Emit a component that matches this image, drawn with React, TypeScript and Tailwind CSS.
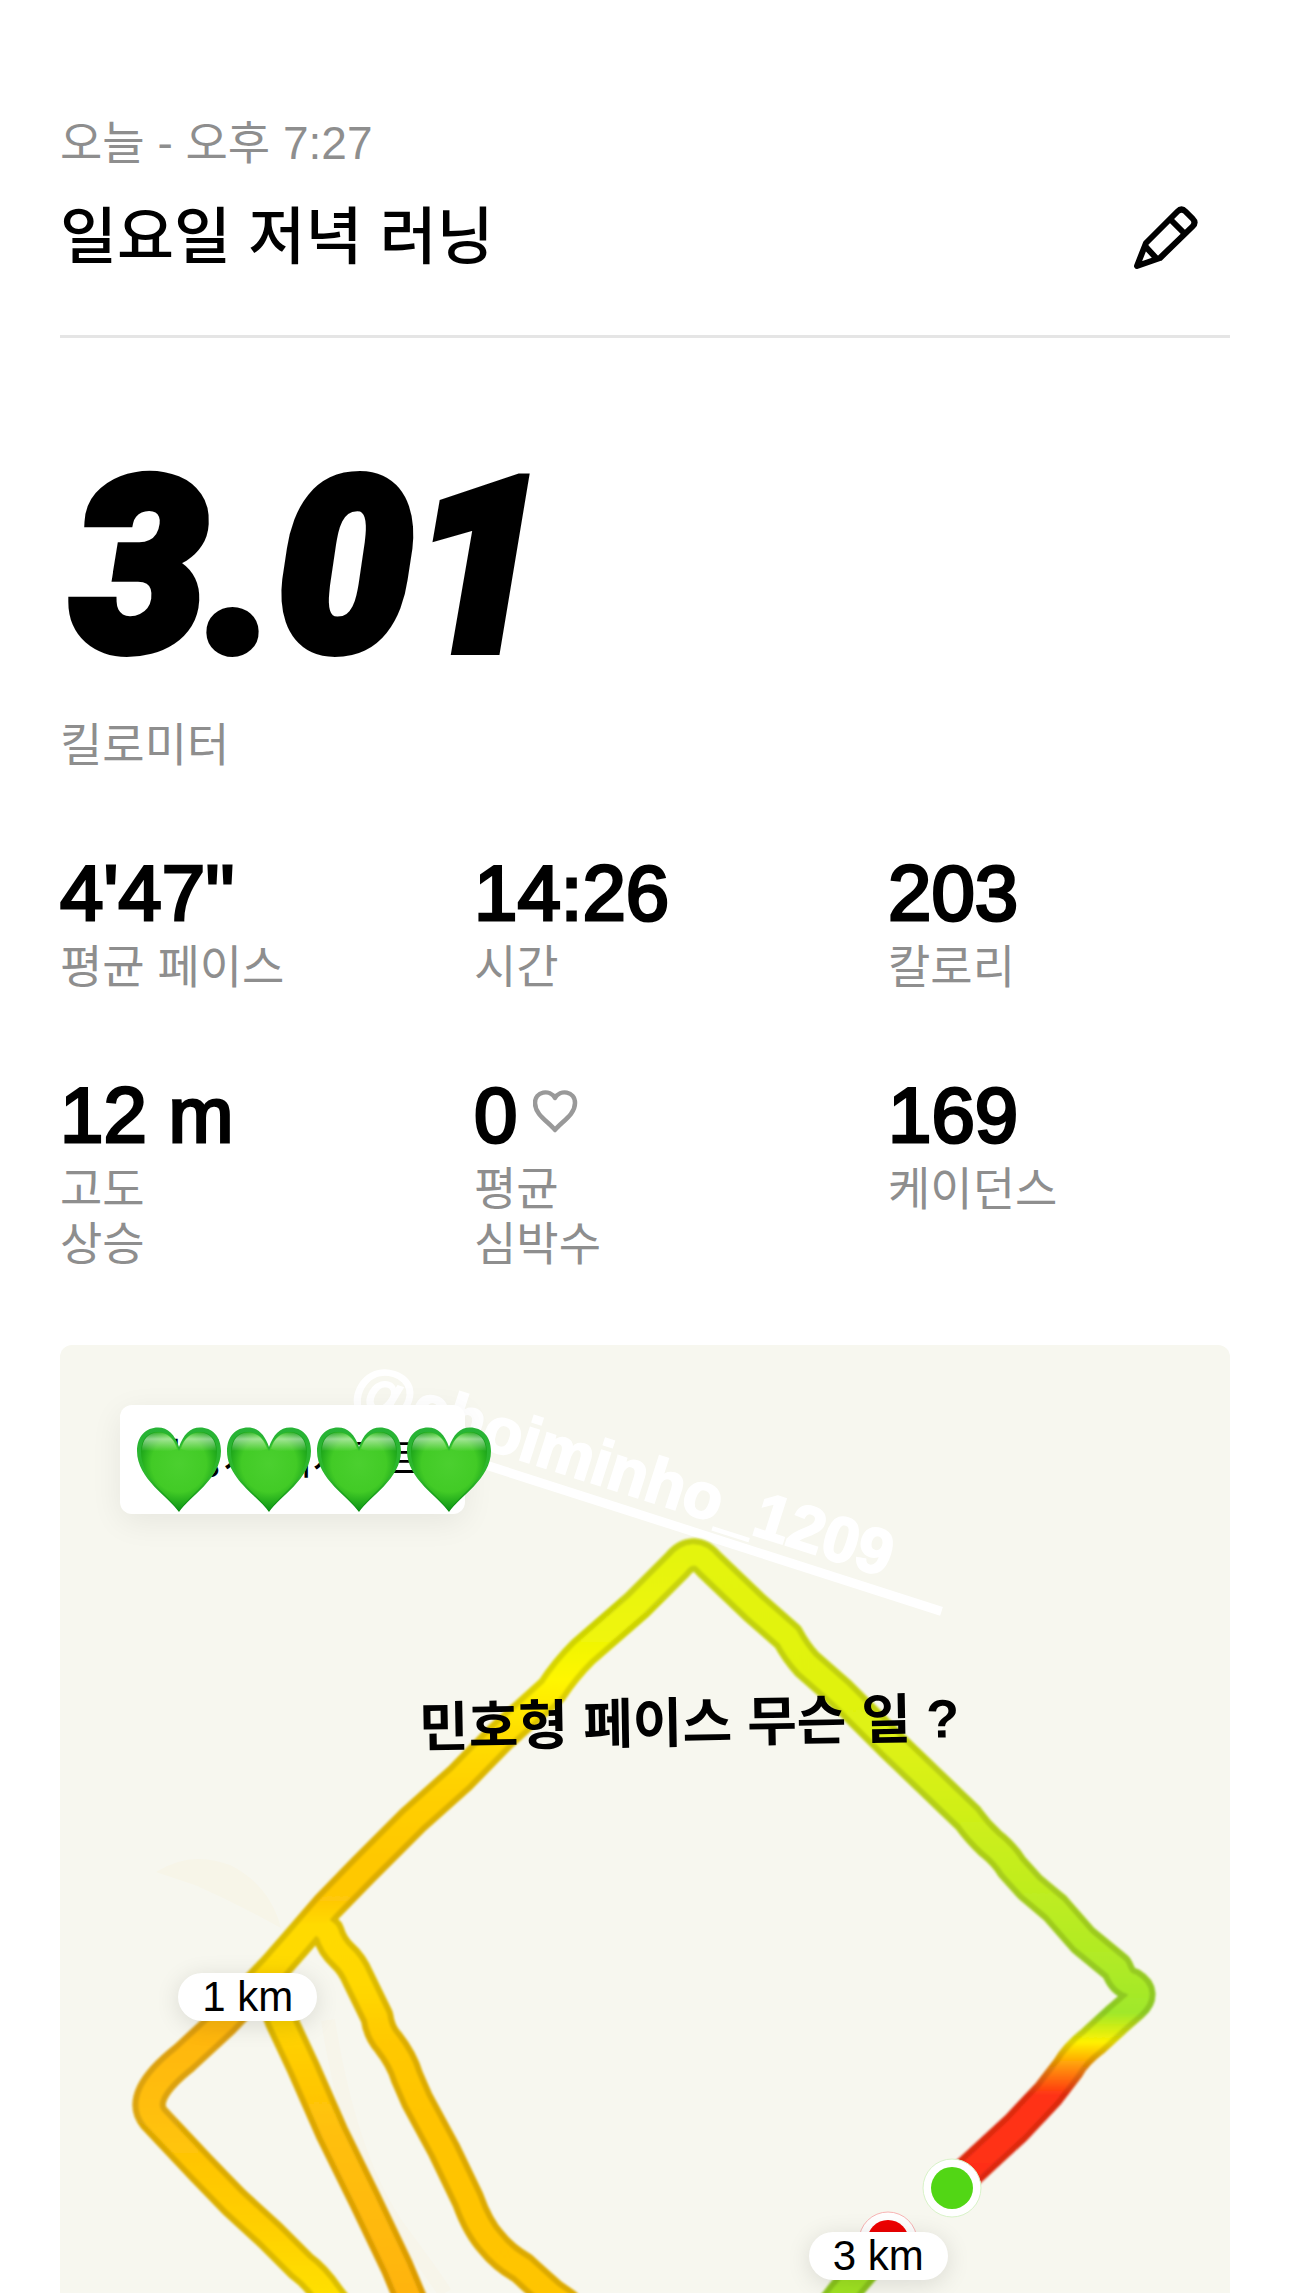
import type { ReactNode } from "react";

type StatProps = { value: string; label: string[]; icon?: ReactNode };

function Stat({ value, label, icon }: StatProps) {
  return (
    <div className="flex flex-col-reverse justify-end">
      <dt className="mt-1 text-[46px] leading-[55px] text-[#8e8e8e]">
        {label.map((line) => (
          <span key={line} className="block">
            {line}
          </span>
        ))}
      </dt>
      <dd className="flex items-center gap-4 text-[78px] leading-[86px] text-black [-webkit-text-stroke:3px_black]">
        {value}
        {icon}
      </dd>
    </div>
  );
}

function PencilIcon() {
  return (
    <svg
      viewBox="0 0 64 64"
      className="size-16"
      fill="none"
      stroke="currentColor"
      strokeWidth="6"
      strokeLinejoin="round"
      aria-hidden="true"
    >
      <path d="M3 60 L12 37 L43.500 5.500 Q47.500 1.500 51.500 5.500 L58.500 12.500 Q62.500 16.500 58.500 20.500 L26 52 Z" />
      <path d="M36 13 L50.500 27.500 M11 40 L22.500 52.500" />
    </svg>
  );
}

function HeartOutline() {
  return (
    <svg viewBox="0 0 48 44" className="h-11 w-12 -translate-y-1" fill="none" stroke="#999" strokeWidth="4.500" strokeLinejoin="round" aria-hidden="true">
      <path d="M22 41 C16 33 2 26 2 14 C2 2 17 0 22 9 C27 0 42 2 42 14 C42 26 28 33 22 41 Z" />
    </svg>
  );
}

function GreenHeart() {
  return (
    <svg viewBox="0 0 84 86" className="h-[86px] w-[84px]" aria-hidden="true">
      <path
        d="M42 85 C32 70 0 52 0 24 C0 9 9 0.500 21 0.500 C31 0.500 38 8 42 20 C46 8 53 0.500 63 0.500 C75 0.500 84 9 84 24 C84 52 52 70 42 85 Z"
        fill="url(#heart-edge)"
      />
      <path
        d="M42 84 C33 69 4 52 4 25 C4 12 11 5 21 5 C31 5 38 12 42 24 C46 12 53 5 63 5 C73 5 80 12 80 25 C80 52 51 69 42 84 Z"
        fill="url(#heart-body)"
      />
      <path d="M5 24 C5 12 12 5.500 21 5.500 C30 5.500 37 11 40 22 C30 27 14 22 5 24 Z" fill="url(#heart-gloss)" />
      <path d="M79 24 C79 12 72 5.500 63 5.500 C54 5.500 47 11 44 22 C54 27 70 22 79 24 Z" fill="url(#heart-gloss)" />
    </svg>
  );
}

function HeartGradients() {
  return (
    <svg className="absolute size-0" aria-hidden="true">
      <defs>
        <linearGradient id="heart-edge" x1="0" y1="0" x2="0" y2="1">
          <stop offset="0" stopColor="#27b336" />
          <stop offset="0.6" stopColor="#2fb82a" />
          <stop offset="1" stopColor="#078a10" />
        </linearGradient>
        <radialGradient id="heart-body" cx="0.5" cy="0.4" r="0.6">
          <stop offset="0" stopColor="#4bd02f" />
          <stop offset="0.6" stopColor="#42cb26" />
          <stop offset="1" stopColor="#0a9414" />
        </radialGradient>
        <linearGradient id="heart-gloss" x1="0" y1="0" x2="0" y2="1">
          <stop offset="0" stopColor="#fff" stopOpacity="0.1" />
          <stop offset="0.35" stopColor="#fff" stopOpacity="0.5" />
          <stop offset="1" stopColor="#fff" stopOpacity="0" />
        </linearGradient>
      </defs>
    </svg>
  );
}

type Stop = [number, string];
type Track = { id: string; d: string; stops: Stop[] };

const tracks: Track[] = [
  {
    id: "finish",
    d: "M888 2241 L866 2266 L843 2293 L830 2310",
    stops: [[2241, "#a0e424"], [2293, "#a0e424"]],
  },
  {
    id: "middle",
    d: "M270 1990 L281 2020 L303 2067 L332 2133 L365 2200 L397 2267 L415 2310",
    stops: [[2020, "#ffd500"], [2067, "#ffcb05"], [2130, "#ffc008"], [2230, "#ffb908"], [2293, "#ffb408"]],
  },
  {
    id: "inner",
    d: "M316 1922 L328 1932 Q332 1946 343 1956 Q352 1964 358 1978 L377 2017 Q379 2032 388 2042 Q402 2060 407 2077 L417 2100 L444 2150 L468 2200 Q478 2228 492 2243 Q503 2257 522 2268 Q535 2280 552 2295 L565 2304",
    stops: [[1920, "#ffda00"], [1985, "#ffd800"], [2040, "#ffc905"], [2120, "#ffc404"], [2293, "#ffc505"]],
  },
  {
    id: "west",
    d: "M693 1555 Q685 1555 677 1565 L637 1605 L583 1652 Q565 1670 552 1690 L500 1737 L460 1778 L413 1820 L363 1870 L327 1907 L295 1944 L274 1968 L223 2022 L184 2058 Q136 2096 154 2118 L170 2135 L202 2169 L234 2202 L270 2235 L301 2266 Q316 2277 328 2295 L338 2308",
    stops: [
      [1553, "#e4f40b"], [1640, "#f0f507"], [1680, "#fff600"], [1730, "#ffdf00"], [1790, "#ffd000"], [1860, "#ffc803"],
      [1900, "#ffc807"], [1925, "#ffda00"], [1965, "#ffda00"], [2000, "#ffc60a"], [2030, "#ffb60d"], [2102, "#ffbe0a"],
      [2180, "#ffc805"], [2230, "#ffd002"], [2293, "#ffe000"],
    ],
  },
  {
    id: "east",
    d: "M693 1555 Q701 1554 709 1564 L755 1608 L788 1637 Q796 1652 807 1664 L840 1693 L892 1745 L942 1793 L968 1818 Q978 1832 990 1843 Q1004 1854 1012 1867 L1030 1887 Q1043 1898 1055 1908 L1083 1940 L1117 1968 Q1122 1982 1131 1984 Q1146 1993 1133 2005 L1118 2018 L1093 2041 Q1076 2054 1068 2068 L1048 2094 L1016 2128 L952 2187",
    stops: [
      [1553, "#e4f40b"], [1740, "#dff213"], [1850, "#c8ee1c"], [1968, "#aeea26"], [2013, "#a0e82a"],
      [2042, "#fff200"], [2065, "#ff9a08"], [2095, "#ff3213"], [2187, "#ff2f15"],
    ],
  },
];

function RouteMap() {
  return (
    <svg viewBox="60 1345 1170 948" className="absolute inset-0 size-full" fill="none" role="img" aria-label="러닝 경로">
      <defs>
        {tracks.map((t) => {
          const start = t.stops[0][0];
          const end = t.stops[t.stops.length - 1][0];
          return (
            <linearGradient key={t.id} id={`track-${t.id}`} gradientUnits="userSpaceOnUse" x1="0" y1={start} x2="0" y2={end}>
              {t.stops.map(([y, color]) => (
                <stop key={y} offset={(y - start) / (end - start)} stopColor={color} />
              ))}
            </linearGradient>
          );
        })}
        <filter id="soft" filterUnits="userSpaceOnUse" x="60" y="1345" width="1170" height="1000">
          <feGaussianBlur stdDeviation="1" />
        </filter>
      </defs>
      <path d="M156 1872 Q190 1850 230 1865 Q270 1885 281 1928 Q240 1905 195 1885 Z" fill="#f7f5e8" />
      <path d="M328 2020 Q350 2160 400 2230 Q430 2270 445 2293" stroke="#f7f5ea" strokeWidth="14" />
      <g strokeLinejoin="round" strokeLinecap="round" filter="url(#soft)">
        {tracks.map((t) => (
          <path key={t.id} d={t.d} stroke={`url(#track-${t.id})`} strokeWidth="33" />
        ))}
        <g opacity="0.13">
          {tracks.map((t) => (
            <path key={t.id} d={t.d} stroke="#000" strokeWidth="33" />
          ))}
        </g>
        {tracks.map((t) => (
          <path key={t.id} d={t.d} stroke={`url(#track-${t.id})`} strokeWidth="21" />
        ))}
      </g>
      <circle cx="888" cy="2241" r="29" fill="#fff" stroke="#f8b4b4" strokeWidth="1" />
      <circle cx="888" cy="2241" r="21" fill="#ee0000" />
      <circle cx="952" cy="2188" r="29" fill="#fff" stroke="#d8f3c8" strokeWidth="1" />
      <circle cx="952" cy="2188" r="21" fill="#52d615" />
    </svg>
  );
}

const pill =
  "absolute flex h-12 items-center rounded-full bg-white px-6 text-[42px] leading-[48px] text-black shadow-[0_4px_24px_rgba(0,0,0,0.12)] whitespace-nowrap";

export default function App() {
  return (
    <main className="bg-white px-[60px] pt-[115px] font-['Liberation_Sans','Noto_Sans_CJK_KR',sans-serif]" lang="ko">
      <HeartGradients />
      <header className="flex items-end justify-between border-b-[3px] border-[#e5e5e5] pb-[61px]">
        <div>
          <p className="text-[46px] leading-[56px] text-[#8e8e8e]">오늘 - 오후 7:27</p>
          <h1 className="mt-[31px] text-[62px] leading-[72px] font-medium text-black">일요일 저녁 러닝</h1>
        </div>
        <button type="button" aria-label="러닝 이름 수정" className="mr-8 mb-1 text-black">
          <PencilIcon />
        </button>
      </header>

      <section className="pt-[102px]">
        <p className="pl-3 font-['Roboto'] text-[240px] leading-[256px] font-black italic text-black [-webkit-text-stroke:10px_black]">3.01</p>
        <p className="mt-[22px] text-[46px] leading-[55px] text-[#8e8e8e]">킬로미터</p>
      </section>

      <dl className="mt-[77px] grid grid-cols-3 gap-x-[72px] gap-y-[77px]">
        <Stat value="4'47''" label={["평균 페이스"]} />
        <Stat value="14:26" label={["시간"]} />
        <Stat value="203" label={["칼로리"]} />
        <Stat value="12 m" label={["고도", "상승"]} />
        <Stat value="0" label={["평균", "심박수"]} icon={<HeartOutline />} />
        <Stat value="169" label={["케이던스"]} />
      </dl>

      <section className="relative mt-[73px] aspect-[1170/948] overflow-hidden rounded-t-xl bg-[#f7f7ef]">
        <span className="absolute top-[10.4%] left-[22.5%] rotate-[17.8deg] border-b-[9px] border-white pr-16 pl-4 text-[64px] leading-[66px] font-bold whitespace-nowrap text-white [-webkit-text-stroke:2px_white]">
          @choiminho_1209
        </span>
        <RouteMap />
        <div className="absolute top-[60px] left-[60px] flex h-[109px] w-[345px] items-center rounded-xl bg-white pl-[26px] text-[42px] whitespace-nowrap text-black shadow-[0_8px_32px_rgba(0,0,0,0.07)]">
          광명시 대서로트
        </div>
        <div className="absolute top-[82px] left-[77px] flex gap-1.5">
          <GreenHeart />
          <GreenHeart />
          <GreenHeart />
          <GreenHeart />
        </div>
        <p className="absolute top-[36.5%] left-[30.7%] rotate-[-1deg] text-[54px] leading-[64px] font-bold whitespace-nowrap text-black">
          민호형 페이스 무슨 일 ?
        </p>
        <span className={`${pill} top-[66.2%] left-[10.1%]`}>1 km</span>
        <span className={`${pill} top-[93.6%] left-[64%]`}>3 km</span>
      </section>
    </main>
  );
}
